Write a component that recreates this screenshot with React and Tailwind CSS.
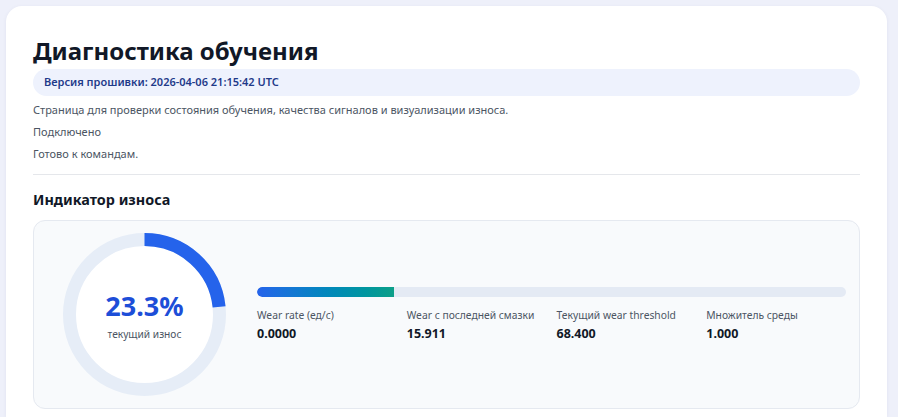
import React from "react";

const stats = [
  { label: "Wear rate (ед/с)", value: "0.0000" },
  { label: "Wear с последней смазки", value: "15.911" },
  { label: "Текущий wear threshold", value: "68.400" },
  { label: "Множитель среды", value: "1.000" },
];

function WearRing({ percent }) {
  const size = 163;
  const stroke = 13;
  const r = (size - stroke) / 2;
  const c = 2 * Math.PI * r;
  const dash = (c * percent) / 100;
  return (
    <div className="relative w-[163px] h-[163px] shrink-0">
      <svg width={size} height={size} className="-rotate-90">
        <circle cx={size / 2} cy={size / 2} r={r} fill="#ffffff" stroke="#e6edf7" strokeWidth={stroke} />
        <circle
          cx={size / 2}
          cy={size / 2}
          r={r}
          fill="none"
          stroke="#2563eb"
          strokeWidth={stroke}
          strokeDasharray={`${dash} ${c}`}
        />
      </svg>
      <div className="absolute inset-0 flex flex-col items-center justify-center pt-[2px]">
        <div className="text-[27px] leading-none font-bold text-[#1d4ed8]">{percent.toFixed(1)}%</div>
        <div className="mt-[10px] text-[10.2px] leading-none text-[#4b5563]">текущий износ</div>
      </div>
    </div>
  );
}

export default function App() {
  const percent = 23.3;
  return (
    <div className="min-h-[417px] bg-[#eef0fa] pt-[6px] pl-[6px] font-['Noto_Sans',sans-serif]">
      <div className="w-[881px] bg-white rounded-t-[16px] shadow-[0_1px_4px_rgba(30,41,90,0.06)] px-[27px] pt-[28px] pb-[8px]">
        <h1 className="text-[24px] leading-[34px] font-bold text-[#111827]">Диагностика обучения</h1>
        <div className="mt-[1px] h-[27px] rounded-full bg-[#eef2fd] px-[11px] flex items-center text-[11px] font-semibold text-[#1e3a8a]">
          Версия прошивки: 2026-04-06 21:15:42 UTC
        </div>
        <div className="mt-[3px] text-[11px] text-[#4b5563]">
          <p className="leading-[22px]">Страница для проверки состояния обучения, качества сигналов и визуализации износа.</p>
          <p className="leading-[22px]">Подключено</p>
          <p className="leading-[22px]">Готово к командам.</p>
        </div>
        <div className="mt-[9px] border-t border-[#e5e7eb]" />
        <h2 className="mt-[15px] text-[14.4px] leading-[20px] font-bold text-[#111827]">Индикатор износа</h2>
        <div className="mt-[10px] rounded-[12px] border border-[#e5e9f0] bg-[#f8fafc] pl-[29px] pr-[13px] py-[12px] flex items-center gap-[31px]">
          <WearRing percent={percent} />
          <div className="flex-1">
            <div className="h-[10px] rounded-full bg-[#e4eaf4] overflow-hidden">
              <div
                className="h-full rounded-l-full bg-gradient-to-r from-[#2563eb] to-[#0d9f88]"
                style={{ width: `${percent}%` }}
              />
            </div>
            <div className="mt-[11px] grid grid-cols-4 gap-[10px]">
              {stats.map((s) => (
                <div key={s.label}>
                  <div className="text-[10.3px] leading-[15px] text-[#4b5563]">{s.label}</div>
                  <div className="mt-[2px] text-[12.5px] leading-[17px] font-bold text-[#111827]">{s.value}</div>
                </div>
              ))}
            </div>
          </div>
        </div>
      </div>
    </div>
  );
}
